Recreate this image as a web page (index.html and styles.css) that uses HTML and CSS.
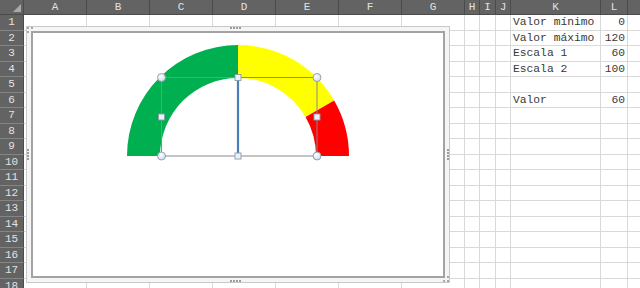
FILE: index.html
```html
<!DOCTYPE html>
<html lang="es">
<head>
<meta charset="utf-8">
<title>Velocímetro</title>
<link rel="stylesheet" href="styles.css">
</head>
<body>
<div class="workbook">
  <div class="sheet">
    <div class="corner"></div><div class="col">A</div><div class="col">B</div><div class="col">C</div><div class="col">D</div><div class="col">E</div><div class="col">F</div><div class="col">G</div><div class="col">H</div><div class="col">I</div><div class="col">J</div><div class="col">K</div><div class="col">L</div><div class="col"></div>
    <div class="row">1</div><div></div><div></div><div></div><div></div><div></div><div></div><div></div><div></div><div></div><div></div><div class="txt">Valor mínimo</div><div class="num">0</div><div></div>
    <div class="row">2</div><div></div><div></div><div></div><div></div><div></div><div></div><div></div><div></div><div></div><div></div><div class="txt">Valor máximo</div><div class="num">120</div><div></div>
    <div class="row">3</div><div></div><div></div><div></div><div></div><div></div><div></div><div></div><div></div><div></div><div></div><div class="txt">Escala 1</div><div class="num">60</div><div></div>
    <div class="row">4</div><div></div><div></div><div></div><div></div><div></div><div></div><div></div><div></div><div></div><div></div><div class="txt">Escala 2</div><div class="num">100</div><div></div>
    <div class="row">5</div><div></div><div></div><div></div><div></div><div></div><div></div><div></div><div></div><div></div><div></div><div></div><div></div><div></div>
    <div class="row">6</div><div></div><div></div><div></div><div></div><div></div><div></div><div></div><div></div><div></div><div></div><div class="txt">Valor</div><div class="num">60</div><div></div>
    <div class="row">7</div><div></div><div></div><div></div><div></div><div></div><div></div><div></div><div></div><div></div><div></div><div></div><div></div><div></div>
    <div class="row">8</div><div></div><div></div><div></div><div></div><div></div><div></div><div></div><div></div><div></div><div></div><div></div><div></div><div></div>
    <div class="row">9</div><div></div><div></div><div></div><div></div><div></div><div></div><div></div><div></div><div></div><div></div><div></div><div></div><div></div>
    <div class="row">10</div><div></div><div></div><div></div><div></div><div></div><div></div><div></div><div></div><div></div><div></div><div></div><div></div><div></div>
    <div class="row">11</div><div></div><div></div><div></div><div></div><div></div><div></div><div></div><div></div><div></div><div></div><div></div><div></div><div></div>
    <div class="row">12</div><div></div><div></div><div></div><div></div><div></div><div></div><div></div><div></div><div></div><div></div><div></div><div></div><div></div>
    <div class="row">13</div><div></div><div></div><div></div><div></div><div></div><div></div><div></div><div></div><div></div><div></div><div></div><div></div><div></div>
    <div class="row">14</div><div></div><div></div><div></div><div></div><div></div><div></div><div></div><div></div><div></div><div></div><div></div><div></div><div></div>
    <div class="row">15</div><div></div><div></div><div></div><div></div><div></div><div></div><div></div><div></div><div></div><div></div><div></div><div></div><div></div>
    <div class="row">16</div><div></div><div></div><div></div><div></div><div></div><div></div><div></div><div></div><div></div><div></div><div></div><div></div><div></div>
    <div class="row">17</div><div></div><div></div><div></div><div></div><div></div><div></div><div></div><div></div><div></div><div></div><div></div><div></div><div></div>
    <div class="row">18</div><div></div><div></div><div></div><div></div><div></div><div></div><div></div><div></div><div></div><div></div><div></div><div></div><div></div>
  </div>

  <!-- floating chart object, selected -->
  <div class="chart-frame">
    <span class="grip grip-top"></span>
    <span class="grip grip-bottom"></span>
    <span class="grip grip-left"></span>
    <span class="grip grip-right"></span>
    <span class="grip-corner grip-tl"></span>
    <span class="grip-corner grip-br"></span>
    <div class="chart-area">
      <svg class="gauge" viewBox="33 33 410 244" width="410" height="244">
        <defs>
          <radialGradient id="knob" cx="40%" cy="35%" r="70%">
            <stop offset="0" stop-color="#ffffff"/>
            <stop offset="1" stop-color="#c9dcec"/>
          </radialGradient>
        </defs>
        <!-- 0–60 -->
        <path fill="#00b050" d="M127 156 A111 111 0 0 1 238 45 L238 78 A78 78 0 0 0 160 156 Z"/>
        <!-- 60–100 -->
        <path fill="#ffff00" d="M238 45 A111 111 0 0 1 334.13 100.5 L305.55 117 A78 78 0 0 0 238 78 Z"/>
        <!-- 100–120 -->
        <path fill="#ff0000" d="M334.13 100.5 A111 111 0 0 1 349 156 L316 156 A78 78 0 0 0 305.55 117 Z"/>

        <!-- needle -->
        <line x1="238" y1="77.5" x2="238" y2="156" stroke="#4a7ebb" stroke-width="2.2"/>

        <!-- selection box -->
        <rect x="161.5" y="77.5" width="155.5" height="78.5" fill="none" stroke="#8a8a8a" stroke-width="1"/>
        <g fill="url(#knob)" stroke="#8b9aa8" stroke-width="0.9">
          <circle cx="161.5" cy="77.5" r="4"/>
          <circle cx="317" cy="77.5" r="4"/>
          <circle cx="161.5" cy="156" r="4"/>
          <circle cx="317" cy="156" r="4"/>
        </g>
        <g fill="#e9f2fa" stroke="#8b9aa8" stroke-width="0.9">
          <rect x="235" y="74.5" width="6" height="6"/>
          <rect x="235" y="153" width="6" height="6"/>
          <rect x="158.5" y="114" width="6" height="6"/>
          <rect x="314" y="114" width="6" height="6"/>
        </g>
      </svg>
    </div>
  </div>
</div>
</body>
</html>
```
FILE: styles.css
```css
html, body {
  margin: 0;
  padding: 0;
  background: #ffffff;
  overflow: hidden;
}

.workbook {
  position: relative;
  width: 640px;
  height: 288px;
  overflow: hidden;
  font-family: "Liberation Mono", "DejaVu Sans Mono", monospace;
}

/* worksheet grid */
.sheet {
  display: grid;
  grid-template-columns: 24px repeat(7, 63px) 15px 16px 15px 90px 27px 80px;
  grid-template-rows: 15px repeat(18, 15.5px);
  width: 708px;
}

.sheet > div {
  box-sizing: border-box;
  border-right: 1px solid #d9d9d9;
  border-bottom: 1px solid #d9d9d9;
  font-size: 11.3px;
  line-height: 14.5px;
  color: #3a3a3a;
  white-space: nowrap;
  overflow: hidden;
}

.sheet > .corner,
.sheet > .col,
.sheet > .row {
  background: #636363;
  color: #e2e2e2;
  text-align: center;
  font-size: 11px;
}

.sheet > .corner {
  position: relative;
  border-right: 1px solid #4b4b4b;
  border-bottom: 1px solid #4b4b4b;
}

.corner::after {
  content: "";
  position: absolute;
  right: 2px;
  bottom: 2px;
  width: 0;
  height: 0;
  border-left: 8px solid transparent;
  border-bottom: 8px solid #a9a9a9;
}

.sheet > .col {
  border-right: 1px solid #4b4b4b;
  border-bottom: 1px solid #4b4b4b;
  line-height: 14px;
}

.sheet > .row {
  border-right: 1px solid #4b4b4b;
  border-bottom: 1px solid #858585;
  line-height: 15px;
}

.sheet > .txt {
  padding-left: 2px;
}

.sheet > .num {
  text-align: right;
  padding-right: 2px;
}

/* chart object floating over the sheet */
.chart-frame {
  position: absolute;
  left: 26px;
  top: 26px;
  width: 424px;
  height: 257px;
  box-sizing: border-box;
  border: 1px solid #c9c9c9;
  background: #f5f5f5;
  padding: 4px;
}

.chart-area {
  box-sizing: border-box;
  width: 100%;
  height: 100%;
  border: 2px solid #a3a3a3;
  background: #ffffff;
  overflow: hidden;
}

.gauge {
  display: block;
}

/* resize grips on the selection frame */
.grip {
  position: absolute;
  background-color: transparent;
}

.grip-top,
.grip-bottom {
  left: 203px;
  width: 11px;
  height: 2px;
  background-image: repeating-linear-gradient(90deg, #9c9c9c 0 2px, transparent 2px 3px);
}

.grip-top { top: 0; }
.grip-bottom { bottom: 0; }

.grip-left,
.grip-right {
  top: 122px;
  width: 2px;
  height: 11px;
  background-image: repeating-linear-gradient(180deg, #9c9c9c 0 2px, transparent 2px 3px);
}

.grip-left { left: 0; }
.grip-right { right: 0; }

.grip-corner {
  position: absolute;
  width: 4px;
  height: 4px;
}

.grip-tl {
  left: 0;
  top: 0;
  border-left: 2px dotted #a8a8a8;
  border-top: 2px dotted #a8a8a8;
}

.grip-br {
  right: 0;
  bottom: 0;
  border-right: 2px dotted #a8a8a8;
  border-bottom: 2px dotted #a8a8a8;
}
```
